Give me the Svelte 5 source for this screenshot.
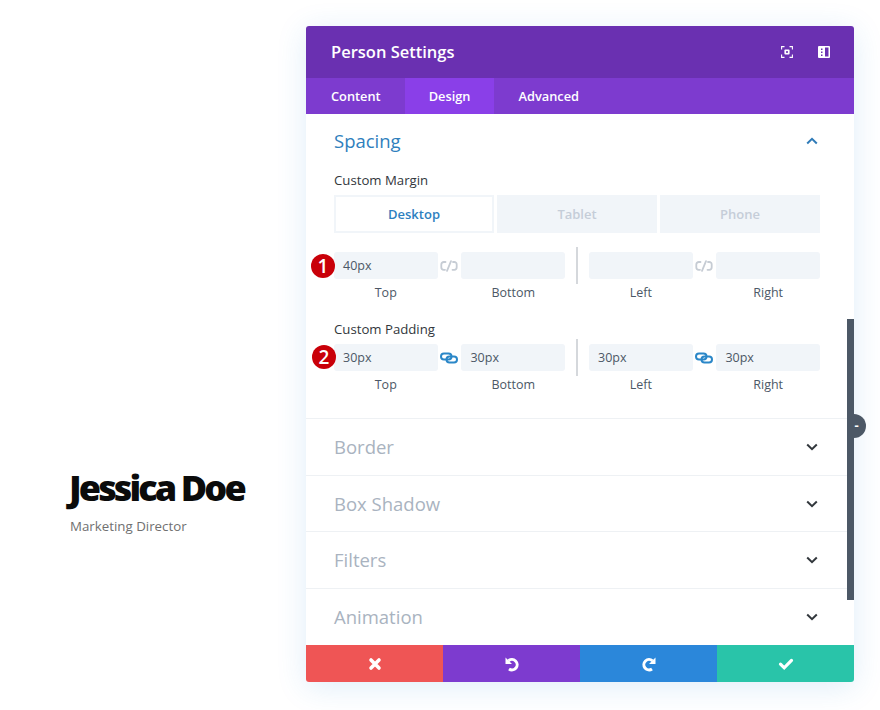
<script lang="ts">
	type Side = { label: string; value: string };
	type Pair = { linked: boolean; sides: [Side, Side] };
	type Group = { title: string; badge: string; pairs: [Pair, Pair] };

	const tabs = ['Content', 'Design', 'Advanced'];
	const devices = ['Desktop', 'Tablet', 'Phone'];
	const closed = ['Border', 'Box Shadow', 'Filters', 'Animation'];

	const groups: Group[] = [
		{
			title: 'Custom Margin',
			badge: '1',
			pairs: [
				{ linked: false, sides: [{ label: 'Top', value: '40px' }, { label: 'Bottom', value: '' }] },
				{ linked: false, sides: [{ label: 'Left', value: '' }, { label: 'Right', value: '' }] }
			]
		},
		{
			title: 'Custom Padding',
			badge: '2',
			pairs: [
				{ linked: true, sides: [{ label: 'Top', value: '30px' }, { label: 'Bottom', value: '30px' }] },
				{ linked: true, sides: [{ label: 'Left', value: '30px' }, { label: 'Right', value: '30px' }] }
			]
		}
	];
</script>

{#snippet linkIcon(linked: boolean)}
	<svg class="link" class:on={linked} width="18" height="12" viewBox="0 0 18 12" fill="none" aria-hidden="true">
		{#if linked}
			<rect x="1" y="1.500" width="10.500" height="6" rx="3" />
			<rect x="6.500" y="4.500" width="10.500" height="6" rx="3" />
		{:else}
			<path d="M5.500 2H3.800a2.500 2.500 0 0 0-2.500 2.500v2.800a2.500 2.500 0 0 0 2.500 2.500H5" />
			<path d="M7 10.800l4-9.600" />
			<path d="M13 2h1.200a2.500 2.500 0 0 1 2.500 2.500v2.800a2.500 2.500 0 0 1-2.500 2.500h-1.700" />
		{/if}
	</svg>
{/snippet}

<div class="page">
	<div class="person">
		<h1>Jessica Doe</h1>
		<p>Marketing Director</p>
	</div>

	<div class="panel">
		<header class="head">
			<span class="title">Person Settings</span>
			<div class="head-icons">
				<svg width="12" height="12" viewBox="0 0 12 12" fill="none" stroke="#fff" stroke-width="1.100" aria-hidden="true">
					<path d="M3.500.6H.6v2.900M8.500.6h2.900v2.900M3.500 11.400H.6V8.500M8.500 11.400h2.900V8.500" />
					<rect x="3.400" y="3.400" width="5.200" height="5.200" rx="1" fill="#fff" stroke="none" />
					<rect x="5.100" y="5.100" width="1.800" height="1.800" fill="#6a30b1" stroke="none" />
				</svg>
				<svg width="12" height="12" viewBox="0 0 12 12" aria-hidden="true">
					<path fill="#fff" fill-rule="evenodd" d="M1 0h10a1 1 0 0 1 1 1v10a1 1 0 0 1-1 1H1a1 1 0 0 1-1-1V1a1 1 0 0 1 1-1zm6 1.500v9h3.500v-9zM3 2.500v1.500h1.500V2.500zm0 3v1.500h1.500V5.500zm0 3v1.500h1.500V8.500z" />
				</svg>
			</div>
		</header>

		<nav class="tabs">
			{#each tabs as tab}
				<span class="tab" class:active={tab === 'Design'}>{tab}</span>
			{/each}
		</nav>

		<div class="body">
			<section class="spacing">
				<div class="section-head">
					<span class="section-title">Spacing</span>
					<svg class="chev up" width="12" height="8" viewBox="0 0 12 8" fill="none" aria-hidden="true">
						<path d="M1.200 6.500 6 1.800l4.800 4.700" />
					</svg>
				</div>

				{#each groups as group, g}
					<div class="group" class:second={g === 1}>
						<div class="group-title">{group.title}</div>
						{#if g === 0}
							<div class="devices">
								{#each devices as device, i}
									<span class="device" class:current={i === 0}>{device}</span>
								{/each}
							</div>
						{/if}
						<div class="fields">
							<span class="badge">{group.badge}</span>
							{#each group.pairs as pair, p}
								{#if p === 1}<span class="rule"></span>{/if}
								<div class="field">
									<div class="input">{pair.sides[0].value}</div>
									<div class="caption">{pair.sides[0].label}</div>
								</div>
								<div class="link-cell">{@render linkIcon(pair.linked)}</div>
								<div class="field">
									<div class="input">{pair.sides[1].value}</div>
									<div class="caption">{pair.sides[1].label}</div>
								</div>
							{/each}
						</div>
					</div>
				{/each}
			</section>

			{#each closed as name}
				<div class="row">
					<span class="row-title">{name}</span>
					<svg class="chev" width="12" height="8" viewBox="0 0 12 8" fill="none" aria-hidden="true">
						<path d="M1.200 1.500 6 6.200l4.800-4.700" />
					</svg>
				</div>
			{/each}
		</div>

		<footer class="foot">
			<span class="act red">
				<svg width="14" height="14" viewBox="0 0 14 14" aria-hidden="true">
					<path d="M3 3l8 8M11 3l-8 8" stroke="#fff" stroke-width="3.600" stroke-linecap="round" fill="none" />
				</svg>
			</span>
			<span class="act purple">
				<svg width="16" height="16" viewBox="0 0 16 16" fill="none" aria-hidden="true">
					<path d="M4.500 4.800A5.200 5.200 0 1 1 5 13" stroke="#fff" stroke-width="3" />
					<path d="M1.500 1.500v6.500h6.500z" fill="#fff" />
				</svg>
			</span>
			<span class="act blue">
				<svg width="16" height="16" viewBox="0 0 16 16" fill="none" aria-hidden="true">
					<path d="M11.500 4.800A5.200 5.200 0 1 0 11 13" stroke="#fff" stroke-width="3" />
					<path d="M14.500 1.500v6.500h-6.500z" fill="#fff" />
				</svg>
			</span>
			<span class="act green">
				<svg width="16" height="14" viewBox="0 0 16 14" fill="none" aria-hidden="true">
					<path d="M2.500 7.200 6.200 10.800 13.500 3.400" stroke="#fff" stroke-width="3.200" stroke-linecap="round" />
				</svg>
			</span>
		</footer>

		<div class="scrollbar"></div>
		<div class="scroll-knob">-</div>
	</div>
</div>

<style>
	:global(body) {
		background: #fff;
		font-family: 'Open Sans', 'Liberation Sans', sans-serif;
	}

	.page {
		display: flex;
		align-items: flex-start;
		height: 710px;
		width: 880px;
		overflow: hidden;
		padding: 26px 26px 0 0;
		box-sizing: border-box;
	}

	.person {
		width: 306px;
		padding: 440px 0 0 69px;
		box-sizing: border-box;
	}

	h1 {
		margin: 0;
		font-size: 36px;
		line-height: 44px;
		font-weight: 800;
		letter-spacing: -2.900px;
		color: #0b0b0b;
	}

	.person p {
		margin: 2px 0 0 1px;
		font-size: 13.300px;
		line-height: 28px;
		color: #707070;
	}

	.panel {
		position: relative;
		width: 548px;
		height: 656px;
		display: flex;
		flex-direction: column;
		border-radius: 3px;
		background: #fff;
		box-shadow: 0 5px 30px rgba(43, 135, 218, 0.15);
	}

	.head {
		height: 52px;
		flex: none;
		display: flex;
		align-items: center;
		justify-content: space-between;
		padding: 0 24px 0 25px;
		background: #6a30b1;
		border-radius: 3px 3px 0 0;
	}

	.title {
		font-size: 16.500px;
		font-weight: 600;
		color: #fff;
		margin-top: -1px;
	}

	.head-icons {
		display: flex;
		gap: 25px;
	}

	.head-icons svg {
		display: block;
	}

	.tabs {
		height: 36px;
		flex: none;
		display: flex;
		padding-left: 1px;
		background: #7d3bcf;
	}

	.tab {
		padding: 0 24px;
		line-height: 37px;
		font-size: 12.800px;
		font-weight: 600;
		color: #fff;
	}

	.tab.active {
		background: #8a3fe8;
	}

	.body {
		flex: 1;
		min-height: 0;
		padding-left: 28px;
		padding-right: 34px;
		display: flex;
		flex-direction: column;
	}

	.spacing {
		height: 304px;
		flex: none;
		padding-top: 13px;
		box-sizing: border-box;
	}

	.section-head {
		height: 27px;
		padding-right: 2px;
		display: flex;
		align-items: center;
		justify-content: space-between;
	}

	.section-title {
		font-size: 18.500px;
		color: #2f80bd;
	}

	.chev {
		display: block;
	}

	.chev path {
		stroke: #32373c;
		stroke-width: 2;
	}

	.chev.up path {
		stroke: #2f7bb8;
	}

	.row .chev {
		margin-top: 1px;
	}

	.group {
		margin-top: 17px;
	}

	.group.second {
		margin-top: 18px;
	}

	.group-title {
		font-size: 13.200px;
		line-height: 18px;
		font-weight: 500;
		color: #32373c;
	}

	.devices {
		display: grid;
		grid-template-columns: repeat(3, 1fr);
		gap: 3px;
		margin-top: 6px;
		margin-bottom: 19px;
	}

	.device {
		height: 38px;
		line-height: 38px;
		text-align: center;
		font-size: 13px;
		font-weight: 600;
		color: #c5cdd8;
		background: #f1f5f9;
	}

	.device.current {
		box-sizing: border-box;
		line-height: 34px;
		color: #2e7fbf;
		background: #fff;
		border: 2px solid #f1f5f9;
	}

	.fields {
		position: relative;
		display: flex;
		align-items: flex-start;
	}

	.group.second .fields {
		margin-top: 6px;
	}

	.badge {
		position: absolute;
		left: -23px;
		top: 2px;
		width: 24px;
		height: 24px;
		border-radius: 50%;
		background: #c90009;
		color: #fff;
		font-size: 19px;
		font-weight: 600;
		line-height: 24px;
		text-align: center;
	}

	.group.second .badge {
		left: -22px;
		top: 1px;
	}

	.field {
		width: 104px;
	}

	.input {
		height: 27px;
		line-height: 27px;
		padding-left: 9px;
		font-size: 12.500px;
		font-weight: 500;
		color: #4c5866;
		background: #f1f5f9;
		border-radius: 3px;
	}

	.caption {
		margin-top: 5px;
		line-height: 18px;
		text-align: center;
		font-size: 12.500px;
		font-weight: 500;
		color: #4c5866;
	}

	.link-cell {
		width: 24px;
		height: 27px;
		display: flex;
		align-items: center;
		justify-content: center;
	}

	.link path {
		stroke: #c6ccd4;
		stroke-width: 1.800;
		stroke-linecap: round;
	}

	.link.on rect {
		stroke: #2b87c8;
		stroke-width: 2;
	}

	.rule {
		width: 2px;
		height: 37px;
		margin: -5px 11px 0 11px;
		background: #d5d8dc;
		flex: none;
	}

	.row {
		height: 56.500px;
		flex: none;
		box-sizing: border-box;
		border-top: 1px solid #eef1f4;
		margin-right: -34px;
		margin-left: -28px;
		padding: 0 36px 0 28px;
		display: flex;
		align-items: center;
		justify-content: space-between;
	}

	.row-title {
		font-size: 18.500px;
		color: #a9b3c0;
	}

	.foot {
		height: 37px;
		flex: none;
		display: flex;
		border-radius: 0 0 3px 3px;
		overflow: hidden;
	}

	.act {
		flex: 1;
		display: flex;
		align-items: center;
		justify-content: center;
	}

	.red { background: #ef5555; }
	.purple { background: #7d3bcf; }
	.blue { background: #2b87da; }
	.green { background: #29c4a9; }

	.scrollbar {
		position: absolute;
		right: 0;
		top: 293px;
		width: 7px;
		height: 281px;
		background: #4c5866;
	}

	.scroll-knob {
		position: absolute;
		left: 541px;
		top: 388px;
		width: 19px;
		height: 24px;
		border-radius: 0 12px 12px 0;
		background: #4c5866;
		color: #fff;
		font-size: 13px;
		font-weight: 700;
		line-height: 22px;
		text-align: center;
	}
</style>
